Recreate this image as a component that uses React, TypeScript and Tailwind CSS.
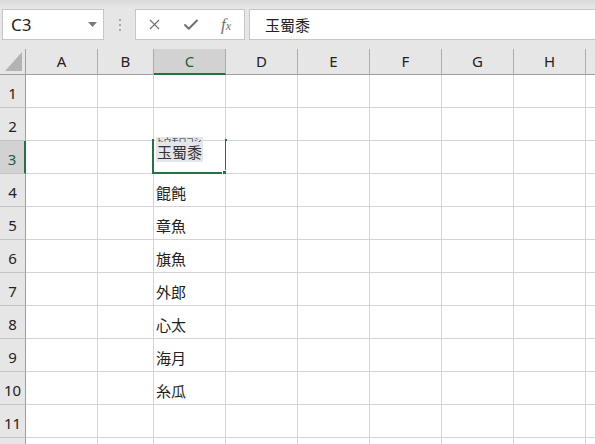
import { X, Check } from "lucide-react";

const cols = [
  { key: "A", w: "w-[72px]" },
  { key: "B", w: "w-[56px]" },
  { key: "C", w: "w-[72px]" },
  { key: "D", w: "w-[72px]" },
  { key: "E", w: "w-[72px]" },
  { key: "F", w: "w-[72px]" },
  { key: "G", w: "w-[72px]" },
  { key: "H", w: "w-[72px]" },
];

const values: Record<number, string> = {
  4: "餛飩",
  5: "章魚",
  6: "旗魚",
  7: "外郎",
  8: "心太",
  9: "海月",
  10: "糸瓜",
};

const uiFont = { fontFamily: '"Noto Sans", "Open Sans", sans-serif' };
const jpFont = { fontFamily: '"Noto Sans CJK JP", "Noto Sans", sans-serif' };

function FormulaBar() {
  return (
    <div className="h-[49px] flex items-start pt-[9px] pl-[2px] bg-[linear-gradient(#d9d9d9,#e6e6e6_7px)]">
      {/* name box */}
      <div className="w-[102px] h-[31px] bg-white border border-[#c6c6c6] flex items-center pl-[8px] pr-[6px]">
        <span className="flex-1 text-[17px] text-[#222] leading-none" style={uiFont}>
          C3
        </span>
        <svg width="9" height="5" viewBox="0 0 9 5">
          <polygon points="0,0 9,0 4.5,5" fill="#7a7a7a" />
        </svg>
      </div>
      <div className="w-[31px] h-[31px] flex flex-col items-center justify-center gap-[3px]">
        <span className="w-[2px] h-[2px] bg-[#a6a6a6]" />
        <span className="w-[2px] h-[2px] bg-[#a6a6a6]" />
        <span className="w-[2px] h-[2px] bg-[#a6a6a6]" />
      </div>
      {/* cancel / enter / fx */}
      <div className="w-[110px] h-[31px] bg-white border border-[#c6c6c6] flex items-center pl-[10px] gap-[19px]">
        <X size={17} strokeWidth={1.6} color="#6f6f6f" />
        <Check size={18} strokeWidth={2.6} color="#6f6f6f" />
        <span
          className="italic text-[17px] text-[#6f6f6f] leading-none ml-[2px]"
          style={{ fontFamily: '"Liberation Serif", serif' }}
        >
          f<span className="text-[12px]">x</span>
        </span>
      </div>
      {/* formula input */}
      <div className="flex-1 ml-[4px] h-[31px] bg-white border-y border-l border-[#c6c6c6] flex items-center pl-[15px]">
        <span className="text-[15px] text-[#222] leading-none" style={jpFont}>
          玉蜀黍
        </span>
      </div>
    </div>
  );
}

function HeaderRow() {
  return (
    <div className="flex h-[26px] bg-[#e6e6e6]" style={uiFont}>
      <div className="w-[26px] shrink-0 border-r border-b border-[#9e9e9e] relative">
        <svg className="absolute left-[5px] top-[3px]" width="18" height="20" viewBox="0 0 18 20">
          <polygon points="17,0 17,19 0,19" fill="#b3b3b3" />
        </svg>
      </div>
      {cols.map((c) => (
        <div
          key={c.key}
          className={`${c.w} shrink-0 flex items-center justify-center border-r border-[#ababab] text-[15px] ${
            c.key === "C"
              ? "bg-[#d2d2d2] border-b-2 border-b-[#217346] text-[#1e5c3a]"
              : "border-b border-b-[#9e9e9e] text-[#222]"
          }`}
        >
          {c.key}
        </div>
      ))}
      <div className="flex-1 border-b border-[#9e9e9e]" />
    </div>
  );
}

function Row({ n }: { n: number }) {
  const selected = n === 3;
  return (
    <div className="flex h-[33px]">
      <div
        className={`w-[26px] shrink-0 flex items-center justify-center pt-[5px] text-[15px] border-b border-[#c4c4c4] ${
          selected
            ? "bg-[#d2d2d2] border-r-2 border-r-[#217346] text-[#1e5c3a]"
            : "bg-[#e6e6e6] border-r border-r-[#9e9e9e] text-[#222]"
        }`}
        style={uiFont}
      >
        {n}
      </div>
      {cols.map((c) => (
        <div
          key={c.key}
          className={`${c.w} shrink-0 relative border-r border-b border-[#d4d4d4] bg-white flex items-end pl-[2px] pb-[6px]`}
        >
          {c.key === "C" && values[n] && (
            <span className="text-[15px] leading-none text-[#222]" style={jpFont}>
              {values[n]}
            </span>
          )}
          {c.key === "C" && selected && (
            <>
              <div className="absolute left-[-2px] top-[-2px] w-[75px] h-[35px] border-x-2 border-b-2 border-[#217346]" />
              <div className="absolute left-[2px] top-[-4px] w-[47px] h-[25px] bg-[#e3e6ea] flex flex-col overflow-hidden whitespace-nowrap">
                <span
                  className="text-[8px] leading-none text-[#333] tracking-[-0.5px] h-[5px] overflow-hidden"
                  style={jpFont}
                >
                  トウモロコシ
                </span>
                <span className="text-[15px] leading-none text-[#333] mt-[2px] pl-[1px]" style={jpFont}>
                  玉蜀黍
                </span>
              </div>
              <div className="absolute right-[-3px] bottom-[-3px] w-[6px] h-[6px] bg-[#217346] border border-white" />
            </>
          )}
        </div>
      ))}
      <div className="flex-1 border-b border-[#d4d4d4] bg-white" />
    </div>
  );
}

export default function App() {
  const rows = Array.from({ length: 12 }, (_, i) => i + 1);
  return (
    <div className="w-[595px] h-[444px] overflow-hidden bg-white">
      <FormulaBar />
      <HeaderRow />
      {rows.map((n) => (
        <Row key={n} n={n} />
      ))}
    </div>
  );
}
